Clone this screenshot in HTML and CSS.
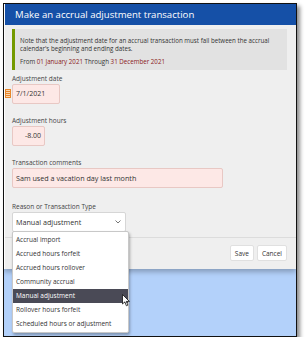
FILE: index.html
```html
<!DOCTYPE html>
<html lang="en">
<head>
<meta charset="UTF-8">
<title>Make an accrual adjustment transaction</title>
<link rel="stylesheet" href="styles.css">
</head>
<body>

<div class="frame">
  <div class="dialog">
    <div class="dialog-title">Make an accrual adjustment transaction</div>
    <div class="dialog-body">
      <div class="note">
        <p>Note that the adjustment date for an accrual transaction must fall between the accrual calendar's beginning and ending dates.</p>
        <p class="range">From <span class="date">01 January 2021</span> Through <span class="date">31 December 2021</span></p>
      </div>

      <div class="field">
        <label>Adjustment date</label>
        <div class="date-wrap">
          <span class="cal-icon"></span>
          <div class="input input-date">7/1/2021</div>
        </div>
      </div>

      <div class="field">
        <label>Adjustment hours</label>
        <div class="input input-hours">-8.00</div>
      </div>

      <div class="field">
        <label>Transaction comments</label>
        <div class="input input-comments">Sam used a vacation day last month</div>
      </div>

      <div class="field field-reason">
        <label>Reason or Transaction Type</label>
        <div class="select">
          <span>Manual adjustment</span>
          <svg class="chev" width="6" height="4" viewBox="0 0 6 4"><path d="M0.5 0.5 L3 3 L5.5 0.5" fill="none" stroke="#666" stroke-width="0.9"/></svg>
        </div>
        <ul class="dropdown">
          <li>Accrual import</li>
          <li>Accrued hours forfeit</li>
          <li>Accrued hours rollover</li>
          <li>Community accrual</li>
          <li class="active">Manual adjustment
            <svg class="cursor" width="9" height="13" viewBox="0 0 9 13"><path d="M0.5 0.5 L0.5 10 L2.8 7.9 L4.4 11.8 L5.9 11.1 L4.3 7.4 L7.4 7.4 Z" fill="#fff" stroke="#111" stroke-width="0.8"/></svg>
          </li>
          <li>Rollover hours forfeit</li>
          <li>Scheduled hours or adjustment</li>
        </ul>
      </div>
    </div>
    <div class="dialog-footer">
      <button class="btn">Save</button>
      <button class="btn">Cancel</button>
    </div>
  </div>
  <div class="backdrop"></div>
</div>

</body>
</html>
```

FILE: styles.css
```css
body {
  margin: 0;
  background: #fff;
  font-family: "Open Sans", "Noto Sans", sans-serif;
}
.frame {
  margin: 3px 0 0 3px;
  width: 292px;
  height: 332px;
  border: 1px solid #111;
  box-shadow: 3px 3px 4px rgba(0,0,0,0.45);
  background: #b3d1fa;
  display: flex;
  flex-direction: column;
  overflow: hidden;
}
.dialog {
  background: #efefef;
  border-left: 1px solid #fff;
  box-shadow: 0 3px 5px rgba(0,0,0,0.25);
  position: relative;
  z-index: 1;
}
.dialog-title {
  background: #1550a7;
  color: #fff;
  height: 21px;
  line-height: 21px;
  padding-left: 10px;
  font-size: 9.6px;
}
.dialog-body {
  padding: 4px 9px 0 7px;
}
.note {
  background: #e2e2e2;
  border-left: 3px solid #759a00;
  padding: 8px 8px 4px 5px;
  font-size: 6.2px;
  line-height: 8px;
  color: #333;
}
.note p {
  margin: 0;
}
.note .range {
  margin-top: 5px;
}
.note .date {
  color: #8b1a1a;
}
.field {
  margin-top: 4px;
  position: relative;
}
.field label {
  display: block;
  font-size: 6.5px;
  line-height: 9px;
  color: #444;
  margin-bottom: 1px;
}
.field + .field {
  margin-top: 12px;
}
.field-reason {
  margin-top: 14px !important;
}
.input {
  background: #fde8e6;
  border: 1px solid #e8c8c4;
  border-radius: 2px;
  height: 18px;
  line-height: 18px;
  font-size: 7px;
  color: #333;
  padding: 0 3px;
  box-sizing: content-box;
}
.date-wrap {
  position: relative;
}
.cal-icon {
  position: absolute;
  left: -7px;
  top: 5px;
  width: 4px;
  height: 7px;
  border: 1px solid #e8872c;
  background: repeating-linear-gradient(#fbd7b0 0 1px, #e8872c 1px 2px);
}
.input-date {
  width: 40px;
}
.input-hours {
  width: 25px;
  text-align: right;
}
.input-comments {
  width: 203px;
  font-size: 7.2px;
}
.select {
  width: 106px;
  height: 18px;
  background: #fff;
  border: 1px solid #d6d6d6;
  border-radius: 2px;
  padding: 0 3px;
  display: flex;
  align-items: center;
  justify-content: space-between;
  font-size: 7.2px;
  color: #333;
}
.chev {
  margin-right: 1px;
}
.dropdown {
  list-style: none;
  margin: 0;
  padding: 1px 0;
  position: absolute;
  left: 0;
  top: 29px;
  width: 115px;
  background: #fff;
  border: 1px solid #c8c8c8;
  border-radius: 2px;
  box-shadow: 1px 2px 3px rgba(0,0,0,0.3);
  z-index: 5;
}
.dropdown li {
  height: 14px;
  line-height: 14px;
  padding-left: 3px;
  font-size: 6.5px;
  color: #333;
  position: relative;
}
.dropdown li.active {
  background: #4a4a56;
  color: #fff;
}
.cursor {
  position: absolute;
  left: 109px;
  top: 5px;
}
.dialog-footer {
  margin-top: 5px;
  border-top: 1px solid #dcdcdc;
  display: flex;
  justify-content: flex-end;
  gap: 3px;
  padding: 7px 9px 8px 0;
}
.btn {
  font-family: "Open Sans", "Noto Sans", sans-serif;
  font-size: 6.5px;
  background: #fff;
  border: 1px solid #e0e0e0;
  border-radius: 2px;
  height: 16px;
  padding: 0 4px;
  color: #333;
}
.backdrop {
  flex: 1;
}
```
